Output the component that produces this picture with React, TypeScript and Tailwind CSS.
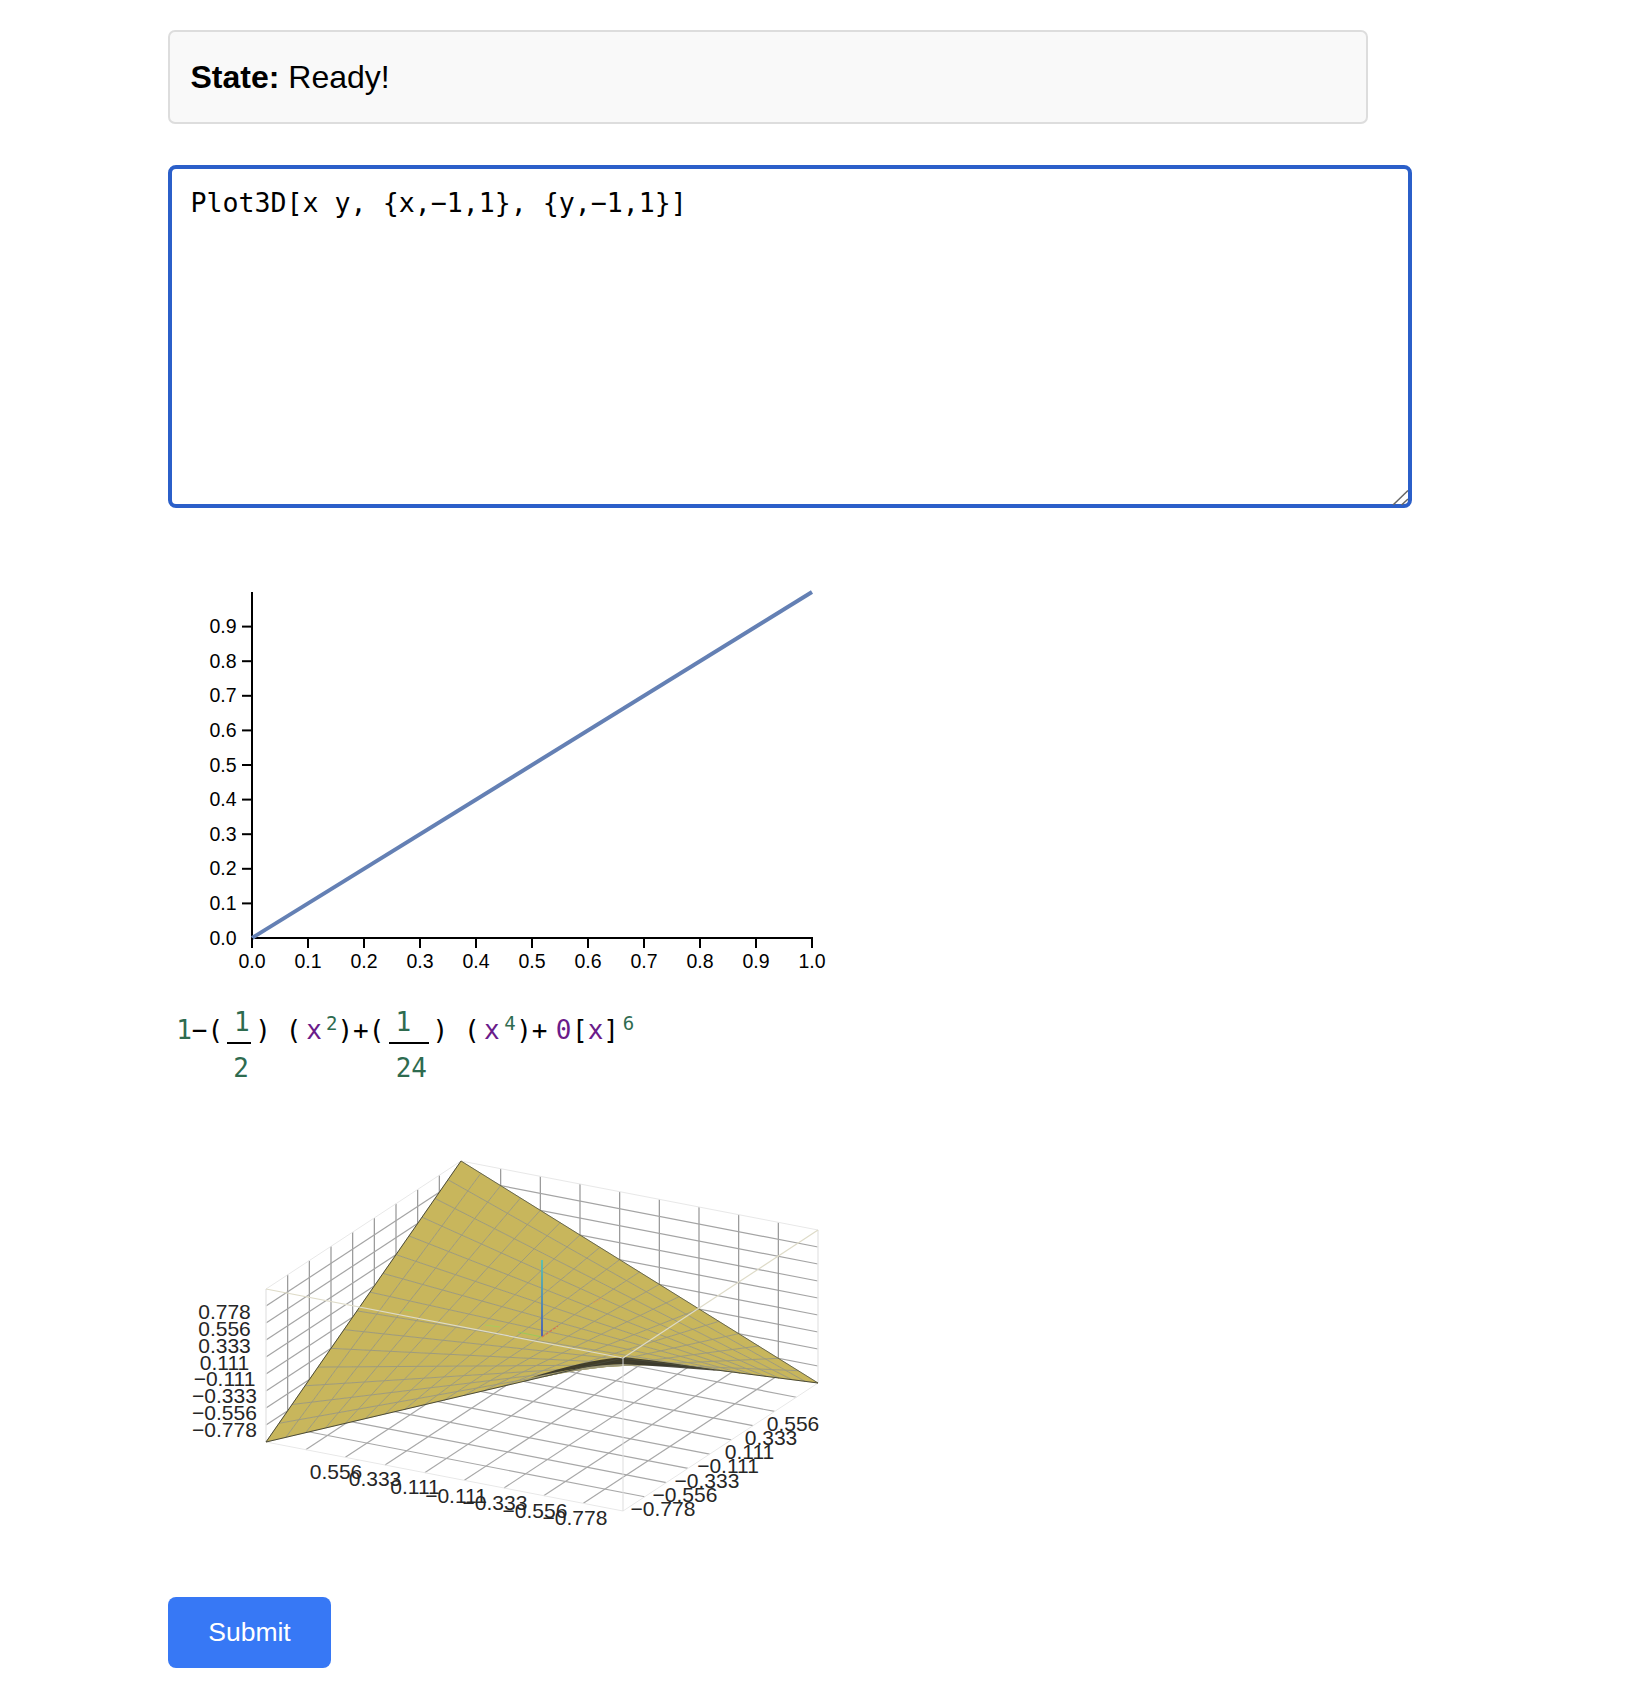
const TICKS = [1, 2, 3, 4, 5, 6, 7, 8, 9];
const A_CELLS = 18;
const B_CELLS = 15;

// orthographic projection of the plot box, a/b along the floor, w is height
function project(a: number, b: number, w: number): [number, number] {
  return [266 + 357 * a + 195 * b, 1442 + 69 * a - 128 * b - 153 * w];
}

function height(a: number, b: number) {
  return a + b - 2 * a * b;
}

function surfacePoint(a: number, b: number) {
  return project(a, b, height(a, b)).join(",");
}

function Edge({
  from,
  to,
  color = "#aaaaaa",
  width = 1,
}: {
  from: [number, number];
  to: [number, number];
  color?: string;
  width?: number;
}) {
  return (
    <line
      x1={from[0]}
      y1={from[1]}
      x2={to[0]}
      y2={to[1]}
      stroke={color}
      strokeWidth={width}
    />
  );
}

function LinePlot() {
  return (
    <svg viewBox="168 560 680 420" className="block h-[420px] w-[680px]">
      <line x1="252" y1="592" x2="252" y2="939" stroke="#000" strokeWidth="2" />
      <line x1="251" y1="938" x2="813" y2="938" stroke="#000" strokeWidth="2" />
      <line x1="252" y1="938" x2="812" y2="592" stroke="#6480b4" strokeWidth="4" />
      {TICKS.map((t) => (
        <g key={t}>
          <line x1="242" x2="252" y1={938 - t * 34.6} y2={938 - t * 34.6} stroke="#000" strokeWidth="2" />
          <text x="236.5" y={944.5 - t * 34.6} textAnchor="end" fontSize="19.5" fill="#000">
            {(t / 10).toFixed(1)}
          </text>
        </g>
      ))}
      <text x="236.5" y="944.5" textAnchor="end" fontSize="19.5" fill="#000">
        0.0
      </text>
      {[0, ...TICKS, 10].map((t) => (
        <g key={t}>
          <line x1={252 + t * 56} x2={252 + t * 56} y1="938" y2="948" stroke="#000" strokeWidth="2" />
          <text x={252 + t * 56} y="967.5" textAnchor="middle" fontSize="19.5" fill="#000">
            {(t / 10).toFixed(1)}
          </text>
        </g>
      ))}
    </svg>
  );
}

function SeriesFormula() {
  const green = "text-[#2e6b4f]";
  const purple = "text-[#6a1b8a]";
  const sup = "mt-[6px] text-[19px] leading-[22px] " + green;
  return (
    <div className="mt-[26px] flex h-[124px] items-start whitespace-pre pl-[8.2px] [font-family:'DejaVu_Sans_Mono',monospace] text-[26px] leading-[32px] text-black">
      <span className="mt-[8px]">
        <span className={green}>1</span>−(
      </span>
      <div className="ml-[3.9px] w-[24px]">
        <div className={"pl-[6.9px] " + green}>1</div>
        <div className="mt-[4px] h-[2px] bg-black" />
        <div className={"mt-[8px] pl-[6.2px] " + green}>2</div>
      </div>
      <span className="ml-[4.2px] mt-[8px]">)</span>
      <span className="ml-[14.9px] mt-[8px]">(</span>
      <span className={"ml-[4.9px] mt-[8px] " + purple}>x</span>
      <span className={"ml-[4px] " + sup}>2</span>
      <span className="mt-[8px]">)+(</span>
      <div className="ml-[4.9px] w-[40px]">
        <div className={"pl-[6.2px] " + green}>1</div>
        <div className="mt-[4px] h-[2px] bg-black" />
        <div className={"mt-[8px] pl-[6.4px] " + green}>24</div>
      </div>
      <span className="ml-[3.2px] mt-[8px]">)</span>
      <span className="ml-[15.9px] mt-[8px]">(</span>
      <span className={"ml-[4.4px] mt-[8px] " + purple}>x</span>
      <span className={"ml-[4.5px] " + sup}>4</span>
      <span className="ml-[0.5px] mt-[8px]">)+</span>
      <span className={"ml-[8.2px] mt-[8px] " + purple}>0</span>
      <span className="ml-[0.7px] mt-[8px]">
        [<span className={purple}>x</span>]
      </span>
      <span className={"ml-[3.8px] " + sup}>6</span>
    </div>
  );
}

const Z_LABELS: [string, number][] = [
  ["0.778", 1311],
  ["0.556", 1328],
  ["0.333", 1345],
  ["0.111", 1362],
  ["−0.111", 1378],
  ["−0.333", 1395],
  ["−0.556", 1412],
  ["−0.778", 1429],
];
const A_LABELS: [string, number, number][] = [
  ["0.556", 336, 1471],
  ["0.333", 375, 1478],
  ["0.111", 415, 1486],
  ["−0.111", 456, 1495],
  ["−0.333", 495, 1502],
  ["−0.556", 535, 1510],
  ["−0.778", 575, 1517],
];
const B_LABELS: [string, number, number][] = [
  ["0.556", 793, 1423],
  ["0.333", 771, 1437],
  ["0.111", 749.5, 1451],
  ["−0.111", 728, 1465],
  ["−0.333", 707, 1480],
  ["−0.556", 685, 1494],
  ["−0.778", 663, 1508],
];

function SurfacePlot() {
  const aSteps = Array.from({ length: A_CELLS }, (_, i) => i);
  const bSteps = Array.from({ length: B_CELLS }, (_, i) => i);
  const grid = [1, 2, 3, 4, 5, 6, 7, 8].map((k) => k / 9);
  return (
    <svg viewBox="168 1130 680 420" className="block h-[420px] w-[680px]">
      <defs>
        <linearGradient id="zAxis" x1="0" y1="0" x2="0" y2="1">
          <stop offset="0" stopColor="#5fc0ac" />
          <stop offset="1" stopColor="#4f62b0" />
        </linearGradient>
      </defs>
      {grid.map((k) => (
        <g key={k}>
          <Edge from={project(0, k, 0)} to={project(0, k, 1)} color="#959595" width={1.2} />
          <Edge from={project(k, 1, 0)} to={project(k, 1, 1)} color="#959595" width={1.2} />
          <Edge from={project(0, 0, k)} to={project(0, 1, k)} color="#a4a4a4" width={1.2} />
          <Edge from={project(0, 1, k)} to={project(1, 1, k)} color="#a4a4a4" width={1.2} />
          <Edge from={project(k, 0, 0)} to={project(k, 1, 0)} color="#a8a8a8" width={1.2} />
          <Edge from={project(0, k, 0)} to={project(1, k, 0)} color="#a8a8a8" width={1.2} />
        </g>
      ))}
      <Edge from={project(0, 0, 1)} to={project(0, 1, 1)} color="#e8e8e8" />
      <Edge from={project(0, 1, 1)} to={project(1, 1, 1)} color="#e8e8e8" />
      <Edge from={project(0, 0, 0)} to={project(0, 0, 1)} color="#e8e8e8" width={1.5} />
      <Edge from={project(1, 1, 0)} to={project(1, 1, 1)} color="#e8e8e8" width={1.5} />
      <Edge from={project(0, 0, 0)} to={project(1, 0, 0)} color="#e8e8e8" />
      <Edge from={project(1, 0, 0)} to={project(1, 1, 0)} color="#e8e8e8" />

      {aSteps.map((i) =>
        bSteps.map((j) => {
          const a0 = i / A_CELLS;
          const a1 = (i + 1) / A_CELLS;
          const b0 = j / B_CELLS;
          const b1 = (j + 1) / B_CELLS;
          return (
            <polygon
              key={i + "-" + j}
              points={[
                surfacePoint(a0, b0),
                surfacePoint(a1, b0),
                surfacePoint(a1, b1),
                surfacePoint(a0, b1),
              ].join(" ")}
              fill="#c8b65c"
              stroke="#c8b65c"
              strokeWidth="0.5"
            />
          );
        }),
      )}
      <g opacity="0.9">
        {aSteps.slice(1).map((i) => (
          <Edge
            key={i}
            from={project(i / A_CELLS, 0, height(i / A_CELLS, 0))}
            to={project(i / A_CELLS, 1, height(i / A_CELLS, 1))}
            color="#9a9880"
          />
        ))}
        {bSteps.slice(1).map((j) => (
          <Edge
            key={j}
            from={project(0, j / B_CELLS, height(0, j / B_CELLS))}
            to={project(1, j / B_CELLS, height(1, j / B_CELLS))}
            color="#9a9880"
          />
        ))}
      </g>
      <path
        d="M530 1378 Q580 1361 623 1357 Q670 1362 720 1371 Q670 1367 623 1364 Q585 1365 530 1378 Z"
        fill="#2b2a20"
        opacity="0.85"
      />
      <Edge from={project(0, 0, 0)} to={project(0, 1, 1)} color="#4a4a3a" />
      <Edge from={project(0, 1, 1)} to={project(1, 1, 0)} color="#66664e" />
      <Edge from={project(0, 0, 0)} to={project(1, 0, 1)} color="#4a4a3a" />
      <Edge from={project(1, 0, 1)} to={project(1, 1, 0)} color="#4a4a3a" />

      <Edge from={project(0, 0, 1)} to={project(1, 0, 1)} color="#dedbc8" width={1.2} />
      <Edge from={project(1, 0, 1)} to={project(1, 1, 1)} color="#dedbc8" width={1.2} />
      <Edge from={project(1, 0, 0)} to={project(1, 0, 1)} color="#dddddd" />

      <rect x="541" y="1260" width="2" height="77" fill="url(#zAxis)" />
      <line x1="542" y1="1337" x2="518" y2="1332" stroke="#9cc85a" strokeWidth="1.2" />
      <line x1="500" y1="1327" x2="485" y2="1325" stroke="#a8cc5c" strokeWidth="1.2" />
      <line x1="413" y1="1311" x2="404" y2="1310" stroke="#a8cc5c" strokeWidth="1.2" />
      <line x1="542" y1="1337" x2="558" y2="1326" stroke="#d8764c" strokeWidth="1.2" strokeDasharray="3 1.5" />
      <line x1="593" y1="1303" x2="602" y2="1298" stroke="#dca050" strokeWidth="1" />

      <g fontSize="21" fill="#262626" textAnchor="middle">
        {Z_LABELS.map(([text, y]) => (
          <text key={text} x="224.5" y={y + 7.5}>
            {text}
          </text>
        ))}
        {A_LABELS.map(([text, x, y]) => (
          <text key={text} x={x} y={y + 7.5}>
            {text}
          </text>
        ))}
        {B_LABELS.map(([text, x, y]) => (
          <text key={text} x={x} y={y + 7.5}>
            {text}
          </text>
        ))}
      </g>
    </svg>
  );
}

export default function App() {
  return (
    <div className="min-h-[1698px] bg-white pl-[168px] pt-[30px] [font-family:'Liberation_Sans',Arial,sans-serif] text-black">
      <div className="h-[94px] w-[1200px] rounded-[7px] border-2 border-[#dddddd] bg-[#f9f9f9] px-[20.5px] pt-[25px] text-[32px] leading-[40px]">
        <b>State:</b> Ready!
      </div>
      <div className="relative mt-[41px] h-[343px] w-[1244px]">
        <textarea
          className="block h-full w-full resize-none rounded-[8px] border-4 border-[#2b5fc9] bg-white pl-[18.5px] pr-[15px] pt-[18px] [font-family:'DejaVu_Sans_Mono',monospace] text-[26.6px] leading-[32px] text-black outline-none"
          defaultValue="Plot3D[x y, {x,−1,1}, {y,−1,1}]"
        />
        <svg viewBox="0 0 20 20" className="pointer-events-none absolute bottom-[3px] right-[4px] h-[20px] w-[20px]">
          <line x1="5" y1="20" x2="20" y2="5.5" stroke="#666" strokeWidth="1.5" />
          <line x1="13.5" y1="20" x2="20" y2="14" stroke="#666" strokeWidth="1.5" />
        </svg>
      </div>
      <div className="mt-[52px]">
        <LinePlot />
      </div>
      <SeriesFormula />
      <SurfacePlot />
      <button className="mt-[47px] h-[71px] w-[163px] rounded-[8px] bg-[#3778f5] text-[26.5px] text-white">
        Submit
      </button>
    </div>
  );
}
